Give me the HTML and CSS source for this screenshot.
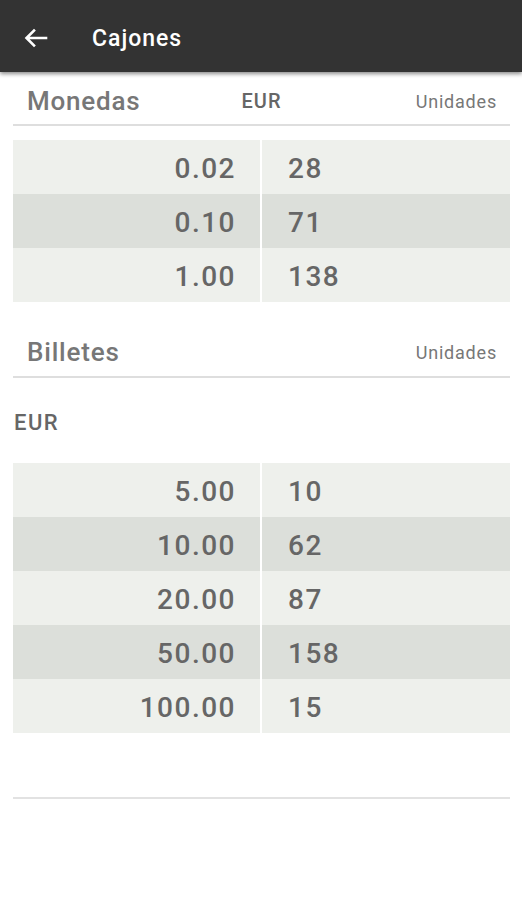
FILE: index.html
```html
<!DOCTYPE html>
<html lang="es">
<head>
    <meta charset="UTF-8">
    <meta name="viewport" content="width=device-width, initial-scale=1.0">
    <title>Cajones</title>
    <link rel="stylesheet" href="styles.css">
</head>
<body>
    <div class="toolbar">
        <svg class="back" width="24" height="20" viewBox="0 0 24 20">
            <path d="M22 10H3M10 2.5L2.5 10L10 17.5" fill="none" stroke="#fff" stroke-width="2.6" stroke-linecap="square"/>
        </svg>
        <span class="title">Cajones</span>
    </div>

    <div class="content">
        <!-- monedas -->
        <div class="section-head coins-head">
            <span class="section-name">Monedas</span>
            <span class="currency">EUR</span>
            <span class="units">Unidades</span>
        </div>
        <div class="table">
            <div class="row"><div class="value">0.02</div><div class="count">28</div></div>
            <div class="row dark"><div class="value">0.10</div><div class="count">71</div></div>
            <div class="row"><div class="value">1.00</div><div class="count">138</div></div>
        </div>

        <!-- billetes -->
        <div class="section-head notes-head">
            <span class="section-name">Billetes</span>
            <span></span>
            <span class="units">Unidades</span>
        </div>
        <div class="currency-label">EUR</div>
        <div class="table">
            <div class="row"><div class="value">5.00</div><div class="count">10</div></div>
            <div class="row dark"><div class="value">10.00</div><div class="count">62</div></div>
            <div class="row"><div class="value">20.00</div><div class="count">87</div></div>
            <div class="row dark"><div class="value">50.00</div><div class="count">158</div></div>
            <div class="row"><div class="value">100.00</div><div class="count">15</div></div>
        </div>

        <div class="bottom-line"></div>
    </div>
</body>
</html>
```

FILE: styles.css
```css
* {
    box-sizing: border-box;
}
body {
    margin: 0;
    font-family: Roboto, "Liberation Sans", sans-serif;
    background: #fff;
}
.toolbar {
    height: 72px;
    padding-top: 4px;
    background-color: #333;
    box-shadow: 0 2px 4px rgba(0, 0, 0, 0.45);
    display: flex;
    align-items: center;
    position: relative;
    z-index: 1;
}
.back {
    margin-left: 24px;
}
.title {
    margin-left: 44px;
    color: #fff;
    font-size: 23px;
    font-weight: 500;
    letter-spacing: 1px;
}
.content {
    padding: 0 12px 0 13px;
}
.section-head {
    display: grid;
    grid-template-columns: 1fr auto 1fr;
    align-items: center;
    padding: 0 14px;
    border-bottom: 2px solid #dedede;
}
.coins-head {
    height: 54px;
    padding-top: 6px;
}
.notes-head {
    height: 76px;
    padding-top: 26px;
}
.section-name {
    font-size: 26px;
    font-weight: 500;
    letter-spacing: 0.8px;
    color: #777;
}
.currency {
    font-size: 20px;
    font-weight: 500;
    letter-spacing: 1px;
    color: #666;
}
.units {
    justify-self: end;
    font-size: 18px;
    letter-spacing: 0.8px;
    margin-right: -1px;
    color: #777;
}
.currency-label {
    height: 85px;
    line-height: 90px;
    padding-left: 1px;
    font-size: 22px;
    font-weight: 500;
    letter-spacing: 1.5px;
    color: #666;
}
.table {
    margin-top: 14px;
}
.currency-label + .table {
    margin-top: 0;
}
.row {
    display: grid;
    grid-template-columns: 247px 1fr;
    column-gap: 2px;
    height: 54px;
    align-items: stretch;
}
.row div {
    display: flex;
    align-items: center;
    padding-top: 2px;
    font-size: 28px;
    font-weight: 500;
    letter-spacing: 1.5px;
    color: #666;
    background-color: #eef0ec;
}
.row.dark div {
    background-color: #dcdfda;
}
.value {
    justify-content: flex-end;
    padding-right: 24px;
}
.count {
    padding-left: 26px;
}
.bottom-line {
    margin-top: 64px;
    border-top: 2px solid #e2e2e2;
}
```
